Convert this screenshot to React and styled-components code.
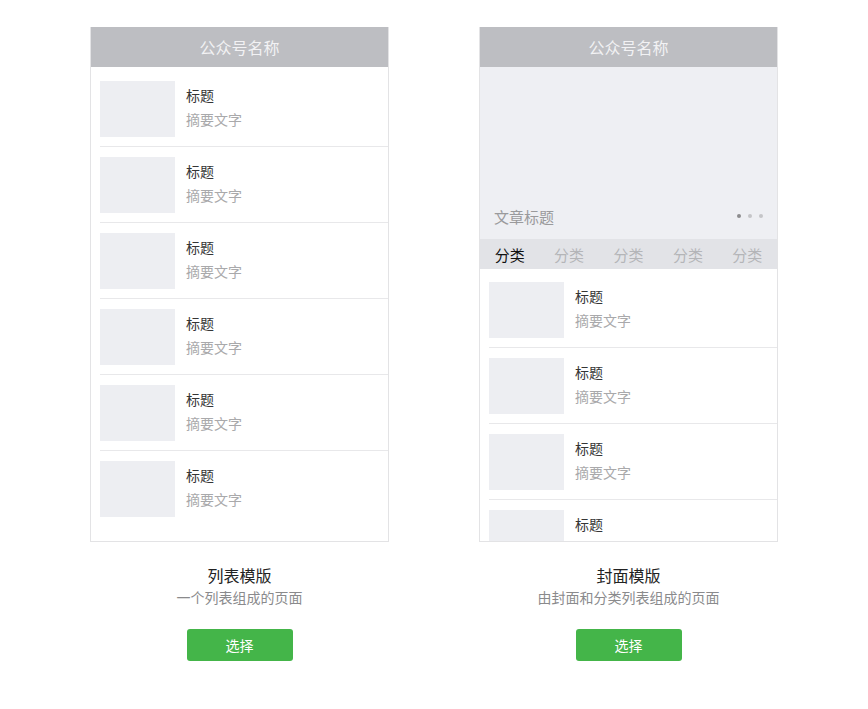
import React from 'react'
import styled, { createGlobalStyle } from 'styled-components'

const GlobalStyle = createGlobalStyle`
  * { box-sizing: border-box; }
  body {
    margin: 0;
    background: #fff;
    font-family: "Noto Sans CJK SC", "Noto Sans", sans-serif;
  }
`

const Page = styled.div`
  display: flex;
  justify-content: center;
  gap: 90px;
  padding-top: 27px;
`

const Column = styled.div`
  width: 299px;
  display: flex;
  flex-direction: column;
  align-items: center;
`

const Phone = styled.div`
  width: 299px;
  height: 515px;
  border: 1px solid #e3e3e5;
  border-top: none;
  overflow: hidden;
  display: flex;
  flex-direction: column;
  background: #fff;
`

const Header = styled.div`
  height: 40px;
  flex-shrink: 0;
  margin: 0 -1px;
  background: #bdbec2;
  color: #f2f2f4;
  font-size: 16px;
  display: flex;
  align-items: center;
  justify-content: center;
`

const List = styled.div`
  padding-top: ${p => p.$top}px;
  padding-left: 9px;
`

const Item = styled.div`
  display: flex;
  padding: 10px 0 9px;
  border-bottom: 1px solid #e8e8ea;

  &:last-child {
    border-bottom: none;
  }
`

const Thumb = styled.div`
  width: 75px;
  height: 56px;
  flex-shrink: 0;
  background: #edeef2;
`

const ItemText = styled.div`
  margin-left: 11px;
  padding-top: 4px;
  display: flex;
  flex-direction: column;
  gap: 4px;
  font-size: 14px;
  line-height: 20px;
`

const ItemTitle = styled.span`
  color: #353535;
`

const ItemDesc = styled.span`
  color: #a9a9ab;
`

const Cover = styled.div`
  height: 172px;
  flex-shrink: 0;
  background: #eeeff3;
  display: flex;
  align-items: flex-end;
  justify-content: space-between;
  padding: 0 14px 12px 14px;
`

const CoverTitle = styled.span`
  font-size: 15px;
  color: #9a9a9c;
`

const Dots = styled.div`
  display: flex;
  gap: 7px;
  margin-bottom: 9px;
`

const Dot = styled.span`
  width: 4px;
  height: 4px;
  border-radius: 50%;
  background: ${p => (p.$active ? '#8c8c8e' : '#c4c5c8')};
`

const Tabs = styled.div`
  height: 30px;
  flex-shrink: 0;
  background: #e2e3e7;
  display: flex;
`

const Tab = styled.div`
  flex: 1;
  display: flex;
  align-items: center;
  justify-content: center;
  font-size: 15px;
  color: ${p => (p.$active ? '#111' : '#b4b5b8')};
`

const Name = styled.div`
  margin-top: 22px;
  font-size: 16px;
  line-height: 22px;
  color: #222;
`

const Desc = styled.div`
  margin-top: 1px;
  font-size: 14px;
  line-height: 20px;
  color: #8a8a8c;
`

const Button = styled.button`
  margin-top: 22px;
  width: 106px;
  height: 32px;
  border: none;
  border-radius: 3px;
  background: #44b549;
  color: #fff;
  font-family: inherit;
  font-size: 14px;
  cursor: pointer;
`

const Entry = () => (
  <Item>
    <Thumb />
    <ItemText>
      <ItemTitle>标题</ItemTitle>
      <ItemDesc>摘要文字</ItemDesc>
    </ItemText>
  </Item>
)

const App = () => (
  <>
    <GlobalStyle />
    <Page>
      <Column>
        <Phone>
          <Header>公众号名称</Header>
          <List $top={4}>
            {[0, 1, 2, 3, 4, 5].map(i => <Entry key={i} />)}
          </List>
        </Phone>
        <Name>列表模版</Name>
        <Desc>一个列表组成的页面</Desc>
        <Button>选择</Button>
      </Column>
      <Column>
        <Phone>
          <Header>公众号名称</Header>
          <Cover>
            <CoverTitle>文章标题</CoverTitle>
            <Dots>
              <Dot $active />
              <Dot />
              <Dot />
            </Dots>
          </Cover>
          <Tabs>
            <Tab $active>分类</Tab>
            <Tab>分类</Tab>
            <Tab>分类</Tab>
            <Tab>分类</Tab>
            <Tab>分类</Tab>
          </Tabs>
          <List $top={3}>
            {[0, 1, 2, 3].map(i => <Entry key={i} />)}
          </List>
        </Phone>
        <Name>封面模版</Name>
        <Desc>由封面和分类列表组成的页面</Desc>
        <Button>选择</Button>
      </Column>
    </Page>
  </>
)

export default App
